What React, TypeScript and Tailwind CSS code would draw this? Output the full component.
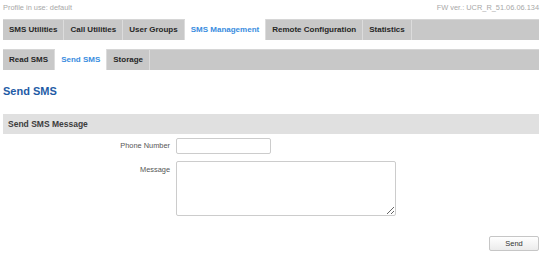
import React from "react";

const font = { fontFamily: '"Liberation Sans", Arial, sans-serif' };

function TabBar({ tabs, active }: { tabs: string[]; active: string }) {
  return (
    <div className="flex h-[21px] w-[536px] bg-[#c8c8c8] border-t border-[#d6d6d6]">
      {tabs.map((t) => (
        <div
          key={t}
          className={
            t === active
              ? "flex items-center px-[6px] border-r border-[#dcdcdc] bg-white text-[8px] font-bold text-[#3a8de0] -mt-px"
              : "flex items-center px-[6px] border-r border-[#dcdcdc] text-[8px] font-bold text-[#262626]"
          }
        >
          {t}
        </div>
      ))}
    </div>
  );
}

export default function App() {
  return (
    <div style={font} className="w-[554px] h-[262px] bg-white pl-[3px] overflow-hidden">
      <div className="flex justify-between w-[536px] h-[19px] text-[7.4px] leading-[16px] text-[#a8a8a8]">
        <span>Profile in use: default</span>
        <span>FW ver.: UCR_R_51.06.06.134</span>
      </div>
      <TabBar
        tabs={["SMS Utilities", "Call Utilities", "User Groups", "SMS Management", "Remote Configuration", "Statistics"]}
        active="SMS Management"
      />
      <div className="h-[9px]" />
      <TabBar tabs={["Read SMS", "Send SMS", "Storage"]} active="Send SMS" />
      <div className="mt-[15px] text-[11px] leading-[13px] font-bold text-[#1f5ca6]">Send SMS</div>
      <div className="mt-[16px] w-[536px] h-[20px] bg-[#e0e0e0] flex items-center pl-[5px] text-[8.5px] font-bold text-[#3c3c3c]">
        Send SMS Message
      </div>
      <div className="mt-[4px] flex items-center">
        <div className="w-[167px] text-right text-[7.4px] text-[#555]">Phone Number</div>
        <input
          type="text"
          className="ml-[6px] w-[95px] h-[16px] border border-[#cccccc] rounded-[2px] bg-white outline-none"
        />
      </div>
      <div className="mt-[7px] flex items-start">
        <div className="w-[167px] text-right text-[7.4px] text-[#555] pt-[3px]">Message</div>
        <textarea
          className="ml-[6px] w-[220px] h-[55px] border border-[#cccccc] rounded-[2px] bg-white outline-none block"
        />
      </div>
      <div className="w-[536px] flex justify-end mt-[20px]">
        <button className="w-[50px] h-[15px] border border-[#c6c6c6] rounded-[2px] bg-gradient-to-b from-white to-[#ebebeb] text-[7.5px] text-[#333] leading-none">
          Send
        </button>
      </div>
    </div>
  );
}
